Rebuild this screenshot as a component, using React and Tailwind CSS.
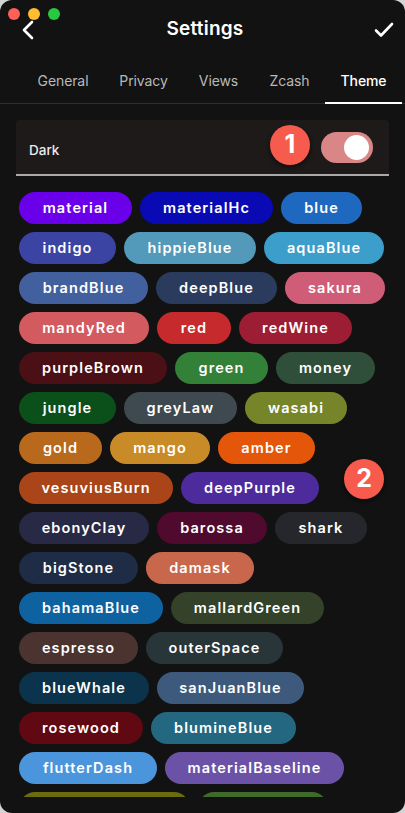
import React from "react";

const rows = [
  [
    { n: "material", bg: "bg-[#6a00ea]", w: "w-[113px]" },
    { n: "materialHc", bg: "bg-[#0a0ab4]", w: "w-[133px]" },
    { n: "blue", bg: "bg-[#1f68bf]", w: "w-[81px]" },
  ],
  [
    { n: "indigo", bg: "bg-[#3b44a2]", w: "w-[97px]" },
    { n: "hippieBlue", bg: "bg-[#5399b9]", w: "w-[132px]" },
    { n: "aquaBlue", bg: "bg-[#3b9ecb]", w: "w-[120px]" },
  ],
  [
    { n: "brandBlue", bg: "bg-[#425f9e]", w: "w-[129px]" },
    { n: "deepBlue", bg: "bg-[#2b3b5e]", w: "w-[121px]" },
    { n: "sakura", bg: "bg-[#cf5d78]", w: "w-[100px]" },
  ],
  [
    { n: "mandyRed", bg: "bg-[#d35a5e]", w: "w-[130px]" },
    { n: "red", bg: "bg-[#c62a2c]", w: "w-[74px]" },
    { n: "redWine", bg: "bg-[#9d1d35]", w: "w-[113px]" },
  ],
  [
    { n: "purpleBrown", bg: "bg-[#4b1016]", w: "w-[148px]" },
    { n: "green", bg: "bg-[#338038]", w: "w-[93px]" },
    { n: "money", bg: "bg-[#2f4f3a]", w: "w-[99px]" },
  ],
  [
    { n: "jungle", bg: "bg-[#0b501a]", w: "w-[97px]" },
    { n: "greyLaw", bg: "bg-[#3f4950]", w: "w-[113px]" },
    { n: "wasabi", bg: "bg-[#76852a]", w: "w-[102px]" },
  ],
  [
    { n: "gold", bg: "bg-[#b8691c]", w: "w-[83px]" },
    { n: "mango", bg: "bg-[#c98b28]", w: "w-[100px]" },
    { n: "amber", bg: "bg-[#e4560a]", w: "w-[97px]" },
  ],
  [
    { n: "vesuviusBurn", bg: "bg-[#a94518]", w: "w-[154px]" },
    { n: "deepPurple", bg: "bg-[#4d2b9d]", w: "w-[138px]" },
  ],
  [
    { n: "ebonyClay", bg: "bg-[#282a45]", w: "w-[130px]" },
    { n: "barossa", bg: "bg-[#4f0a2e]", w: "w-[110px]" },
    { n: "shark", bg: "bg-[#25272c]", w: "w-[92px]" },
  ],
  [
    { n: "bigStone", bg: "bg-[#1f2c45]", w: "w-[119px]" },
    { n: "damask", bg: "bg-[#c8674c]", w: "w-[108px]" },
  ],
  [
    { n: "bahamaBlue", bg: "bg-[#0e62a0]", w: "w-[144px]" },
    { n: "mallardGreen", bg: "bg-[#334228]", w: "w-[153px]" },
  ],
  [
    { n: "espresso", bg: "bg-[#4b3330]", w: "w-[119px]" },
    { n: "outerSpace", bg: "bg-[#283639]", w: "w-[137px]" },
  ],
  [
    { n: "blueWhale", bg: "bg-[#0b344c]", w: "w-[130px]" },
    { n: "sanJuanBlue", bg: "bg-[#3d5a7c]", w: "w-[147px]" },
  ],
  [
    { n: "rosewood", bg: "bg-[#600913]", w: "w-[124px]" },
    { n: "blumineBlue", bg: "bg-[#236880]", w: "w-[145px]" },
  ],
  [
    { n: "flutterDash", bg: "bg-[#4a95dc]", w: "w-[138px]" },
    { n: "materialBaseline", bg: "bg-[#6b52a6]", w: "w-[179px]" },
  ],
  [
    { n: "", bg: "bg-[#6b6b10]", w: "w-[171px]" },
    { n: "", bg: "bg-[#3e6b2a]", w: "w-[130px]" },
  ],
];

const tabs = [
  { t: "General", w: "w-[82px]" },
  { t: "Privacy", w: "w-[79px]" },
  { t: "Views", w: "w-[71px]" },
  { t: "Zcash", w: "w-[71px]" },
  { t: "Theme", w: "w-[77px]" },
];

function Badge({ n, cls }) {
  return (
    <div
      className={`absolute ${cls} w-[40px] h-[40px] rounded-full bg-[#f65b4d] flex items-center justify-center text-white text-[25px] font-bold shadow-[0_2px_4px_rgba(0,0,0,0.6)]`}
    >
      {n}
    </div>
  );
}

export default function App() {
  return (
    <div
      className="w-[405px] h-[813px] bg-[#d4d4d4]"
      style={{ fontFamily: "Inter, 'Noto Sans', sans-serif" }}
    >
      <div className="relative w-full h-full rounded-[12px] bg-[#121212] overflow-hidden flex flex-col">
        {/* traffic lights */}
        <div className="absolute left-[8px] top-[8px] flex gap-[8px]">
          <div className="w-[12px] h-[12px] rounded-full bg-[#fe5f57]" />
          <div className="w-[12px] h-[12px] rounded-full bg-[#febc2e]" />
          <div className="w-[12px] h-[12px] rounded-full bg-[#28c840]" />
        </div>

        {/* title bar */}
        <div className="h-[58px] flex items-center justify-between pl-[20px] pr-[9px] pt-[1px]">
          <svg width="18" height="22" viewBox="0 0 18 22" fill="none">
            <path d="M12 3 L4 11 L12 19" stroke="white" strokeWidth="2.6" strokeLinecap="round" strokeLinejoin="round" />
          </svg>
          <div className="text-white text-[19px] font-semibold tracking-[0.2px]">Settings</div>
          <svg width="24" height="20" viewBox="0 0 24 20" fill="none">
            <path d="M4 10.5 L9 15.5 L20 4" stroke="white" strokeWidth="2.6" strokeLinecap="round" strokeLinejoin="round" />
          </svg>
        </div>

        {/* tabs */}
        <div className="h-[46px] flex pl-[22px] border-b border-[#2e2e2e]">
          {tabs.map(({ t, w }) => (
            <div
              key={t}
              className={
                t === "Theme"
                  ? `${w} shrink-0 flex items-center justify-center text-[14px] font-medium tracking-[-0.1px] text-white border-b-2 border-white -mb-px`
                  : `${w} shrink-0 flex items-center justify-center text-[14px] tracking-[-0.1px] text-[#b9b9b9] border-b-2 border-transparent -mb-px`
              }
            >
              {t}
            </div>
          ))}
        </div>

        {/* content */}
        <div className="h-[693px] overflow-hidden px-4 pt-4">
          <div className="h-[56px] bg-[#1e1a1a] rounded-t-[4px] border-b-[2px] border-[#a9a9a9] flex items-center justify-between pl-[13px] pr-[16px]">
            <span className="text-[#ececec] text-[13.5px] font-medium mt-[7px]">Dark</span>
            <div className="w-[52px] h-[31px] rounded-full bg-[#d98686] flex items-center justify-end pr-[4px] mt-[1px]">
              <div className="w-[25px] h-[25px] rounded-full bg-white" />
            </div>
          </div>

          <div className="mt-4 pl-[3px] flex flex-col gap-2">
            {rows.map((row, i) => (
              <div key={i} className="flex gap-2">
                {row.map((c, j) => (
                  <div
                    key={j}
                    className={`${c.bg} ${c.w} h-[32px] rounded-full flex items-center justify-center text-white text-[14.5px] font-semibold tracking-[1.1px] shrink-0`}
                  >
                    {c.n}
                  </div>
                ))}
              </div>
            ))}
          </div>
        </div>

        <Badge n="1" cls="left-[270px] top-[125px]" />
        <Badge n="2" cls="left-[344px] top-[459px]" />
      </div>
    </div>
  );
}
